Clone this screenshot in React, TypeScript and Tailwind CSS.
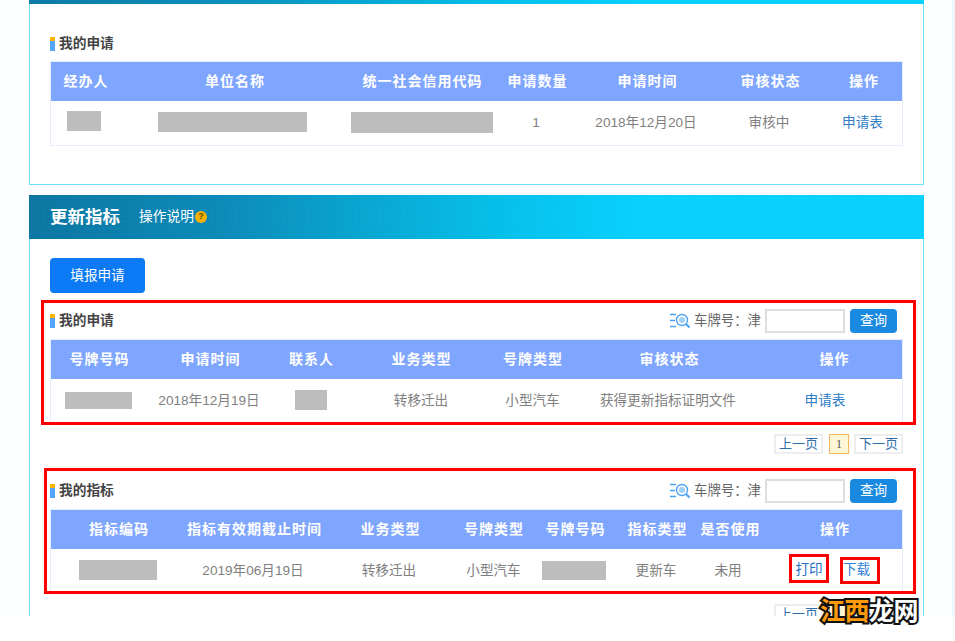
import { ReactNode } from "react";

type Column = { label: string; width: string };

const Redacted = ({ className }: { className: string }) => (
  <span className={`inline-block align-middle bg-[#bdbdbd] ${className}`} />
);

const SearchGlyph = () => (
  <svg width="20" height="16" viewBox="0 0 20 16" fill="none" className="shrink-0">
    <g stroke="#4ba3f5" strokeWidth="1.4">
      <path d="M0 1.5h6M0 7.5h5M0 13.5h6" />
      <circle cx="12" cy="7" r="5.5" />
      <path d="M16 11l3.5 3.5" strokeWidth="2" />
    </g>
    <circle cx="12" cy="7" r="3" fill="#9fd0f8" />
  </svg>
);

const SectionTitle = ({ children }: { children: ReactNode }) => (
  <div className="flex items-center">
    <div className="flex flex-col w-[5px] h-[14px] mr-[4px]">
      <div className="h-[4px] bg-[#ffb400]" />
      <div className="flex-1 bg-[#55a5ff]" />
    </div>
    <h3 className="text-[13.7px] font-bold text-[#444]">{children}</h3>
  </div>
);

const SearchBar = () => (
  <div className="flex items-center">
    <SearchGlyph />
    <span className="ml-[4px] text-[13.4px] text-[#666]">车牌号：津</span>
    <input className="ml-[4px] w-[80px] h-[24px] bg-white border-2 border-[#dedede] outline-none" />
    <button className="ml-[5px] w-[47px] h-[24px] rounded-[4px] bg-[#1a8ae0] text-white text-[13.6px]">查询</button>
  </div>
);

const DataTable = ({ columns, rows, rowHeight, cellClass = "", bottomBorder }: { columns: Column[]; rows: ReactNode[][]; rowHeight: string; cellClass?: string; bottomBorder?: boolean }) => (
  <div className={`border-x border-t border-[#e6eefb] ${bottomBorder ? "border-b" : ""}`}>
    <table className="w-full table-fixed border-collapse">
      <colgroup>
        {columns.map((c) => (
          <col key={c.label} className={c.width} />
        ))}
      </colgroup>
      <thead>
        <tr className="h-[39px] bg-[#7fa6ff]">
          {columns.map((c) => (
            <th key={c.label} className="p-0 pl-[1px] pb-[1px] text-center text-[14px] font-bold tracking-[1px] text-white whitespace-nowrap">
              {c.label}
            </th>
          ))}
        </tr>
      </thead>
      <tbody>
        {rows.map((row, i) => (
          <tr key={i} className={rowHeight}>
            {row.map((cell, j) => (
              <td key={j} className={`p-0 text-center text-[13.6px] text-[#808080] whitespace-nowrap ${cellClass}`}>
                {cell}
              </td>
            ))}
          </tr>
        ))}
      </tbody>
    </table>
  </div>
);

const Pager = () => (
  <div className="flex justify-end gap-[5px] text-[13px] text-[#2f6ea8]">
    <span className="w-[49px] h-[20px] mr-[1px] flex items-center justify-center border-2 border-[#eeeeee]">上一页</span>
    <span className="w-[20px] h-[20px] flex items-center justify-center border border-[#f7b45c] bg-[#fff6d6] font-['Liberation_Serif',serif] text-[#555] text-[12px]">1</span>
    <span className="w-[49px] h-[20px] flex items-center justify-center border-2 border-[#eeeeee]">下一页</span>
  </div>
);

const linkCls = "text-[#2f7cc6]";

const topColumns: Column[] = [
  { label: "经办人", width: "w-[69px]" },
  { label: "单位名称", width: "w-[229px]" },
  { label: "统一社会信用代码", width: "w-[146px]" },
  { label: "申请数量", width: "w-[84px]" },
  { label: "申请时间", width: "w-[136px]" },
  { label: "审核状态", width: "w-[110px]" },
  { label: "操作", width: "w-auto" },
];

const applyColumns: Column[] = [
  { label: "号牌号码", width: "w-[96px]" },
  { label: "申请时间", width: "w-[126px]" },
  { label: "联系人", width: "w-[76px]" },
  { label: "业务类型", width: "w-[144px]" },
  { label: "号牌类型", width: "w-[79px]" },
  { label: "审核状态", width: "w-[194px]" },
  { label: "操作", width: "w-auto" },
];

const quotaColumns: Column[] = [
  { label: "指标编码", width: "w-[135px]" },
  { label: "指标有效期截止时间", width: "w-[136px]" },
  { label: "业务类型", width: "w-[136px]" },
  { label: "号牌类型", width: "w-[71px]" },
  { label: "号牌号码", width: "w-[92px]" },
  { label: "指标类型", width: "w-[72px]" },
  { label: "是否使用", width: "w-[74px]" },
  { label: "操作", width: "w-auto" },
];

export default function App() {
  return (
    <div className="relative h-[641px] bg-white overflow-hidden font-['Liberation_Sans','Noto_Sans_CJK_SC',sans-serif]">
      <div className="h-[616px] overflow-hidden bg-[#fcfeff] border-r-[3px] border-[#ecf8fd] pl-[29px] pr-[28px]">
        {/* 第一块，顶部被截掉 */}
        <section>
          <div className="h-[4px] bg-[linear-gradient(to_right,#0e7aa6,#0c8fbd_22%,#06bfe8_52%,#08d0ff_68%)]" />
          <div className="h-[181px] bg-white border-x border-b border-[#6ddffb] px-[20px] pt-[26px]">
            <div className="h-[28px] flex items-center">
              <SectionTitle>我的申请</SectionTitle>
            </div>
            <div className="mt-[3px]">
              <DataTable
                columns={topColumns}
                rowHeight="h-[44px]"
                bottomBorder
                rows={[
                  [
                    <Redacted className="w-[34px] h-[20px] -translate-x-[2px] -translate-y-[2px]" />,
                    <Redacted className="w-[149px] h-[20px] -translate-x-[2px] -translate-y-[1px]" />,
                    <Redacted className="w-[142px] h-[21px] -translate-y-[1px]" />,
                    <span className="relative -left-[1px]">1</span>,
                    <span className="relative -left-[1px]">2018年12月20日</span>,
                    <span className="relative -left-[1px]">审核中</span>,
                    <span className={`relative -left-[1px] ${linkCls}`}>申请表</span>,
                  ],
                ]}
              />
            </div>
          </div>
        </section>

        <section className="mt-[10px]">
          <div className="h-[44px] flex items-center pl-[21px] bg-[radial-gradient(rgba(255,255,255,0.03)_1px,transparent_1px),linear-gradient(to_right,#0c76a2,#0c8bb9_22%,#06bfe8_52%,#08d0ff_68%)] bg-[length:6px_6px,100%_100%]">
            <h2 className="text-[17.5px] font-bold text-white">更新指标</h2>
            <span className="ml-[19px] text-[13.75px] text-white">操作说明</span>
            <span className="ml-[1px] w-[12px] h-[12px] rounded-full bg-[#f5b000] text-[#6b4a00] text-[9px] font-bold flex items-center justify-center">?</span>
          </div>
          <div className="h-[400px] bg-white border-x border-[#6ddffb] px-[20px] pt-[19px]">
            <button className="w-[95px] h-[35px] pt-[1px] rounded-[4px] bg-[#0c7af5] text-white text-[13.6px]">填报申请</button>

            <div className="mt-[7px] -ml-[9px] -mr-[13px] pl-[6px] pr-[10px] border-[3px] border-[#ff0000]">
              <div className="h-[36px] flex items-center justify-between pr-[6px]">
                <SectionTitle>我的申请</SectionTitle>
                <SearchBar />
              </div>
              <DataTable
                columns={applyColumns}
                rowHeight="h-[43px]"
                cellClass="pt-[2px]"
                rows={[
                  [
                    <Redacted className="w-[67px] h-[17px] -translate-x-[1px] -translate-y-[1px]" />,
                    <span className="relative -left-[1px]">2018年12月19日</span>,
                    <Redacted className="w-[32px] h-[20px] -translate-y-[2px]" />,
                    "转移迁出",
                    "小型汽车",
                    <span className="relative -left-[1px]">获得更新指标证明文件</span>,
                    <span className={`relative -left-[9px] ${linkCls}`}>申请表</span>,
                  ],
                ]}
              />
            </div>

            <div className="mt-[9px]">
              <Pager />
            </div>

            <div className="mt-[14px] -ml-[6px] -mr-[13px] pl-[3px] pr-[10px] border-[3px] border-[#ff0000]">
              <div className="h-[38px] pt-[2px] flex items-center justify-between pr-[6px]">
                <SectionTitle>我的指标</SectionTitle>
                <SearchBar />
              </div>
              <DataTable
                columns={quotaColumns}
                rowHeight="h-[42px]"
                cellClass="pt-[2px]"
                rows={[
                  [
                    <Redacted className="w-[78px] h-[20px] -translate-x-[1px] -translate-y-[1px]" />,
                    <span className="relative -left-[1px]">2019年06月19日</span>,
                    <span className="relative -left-[1px]">转移迁出</span>,
                    "小型汽车",
                    <Redacted className="w-[64px] h-[19px] -translate-x-[1px] -translate-y-[1px]" />,
                    <span className="relative -left-[1px]">更新车</span>,
                    <span className="relative -left-[2px]">未用</span>,
                    <div className="flex items-start justify-center gap-[11px] -translate-y-[2px]">
                      <span className="w-[40px] h-[29px] pt-[3px] flex items-center justify-center border-[3px] border-[#ff0000] text-[#1f6fc4]">打印</span>
                      <span className="w-[40px] h-[27px] mt-[3px] pr-[7px] flex items-center justify-center border-[3px] border-[#ff0000] text-[#2f80d8]">下载</span>
                    </div>,
                  ],
                ]}
              />
            </div>

            <div className="mt-[10px]">
              <Pager />
            </div>
          </div>
        </section>
      </div>

      {/* 水印 */}
      <div className="absolute left-[820px] top-[596px] text-[25px] leading-[30px] font-bold tracking-[-0.5px] whitespace-nowrap [-webkit-text-stroke:4px_#111] [paint-order:stroke_fill]">
        <span className="text-[#ff9a0a]">江西</span>
        <span className="text-white">龙网</span>
      </div>
    </div>
  );
}
